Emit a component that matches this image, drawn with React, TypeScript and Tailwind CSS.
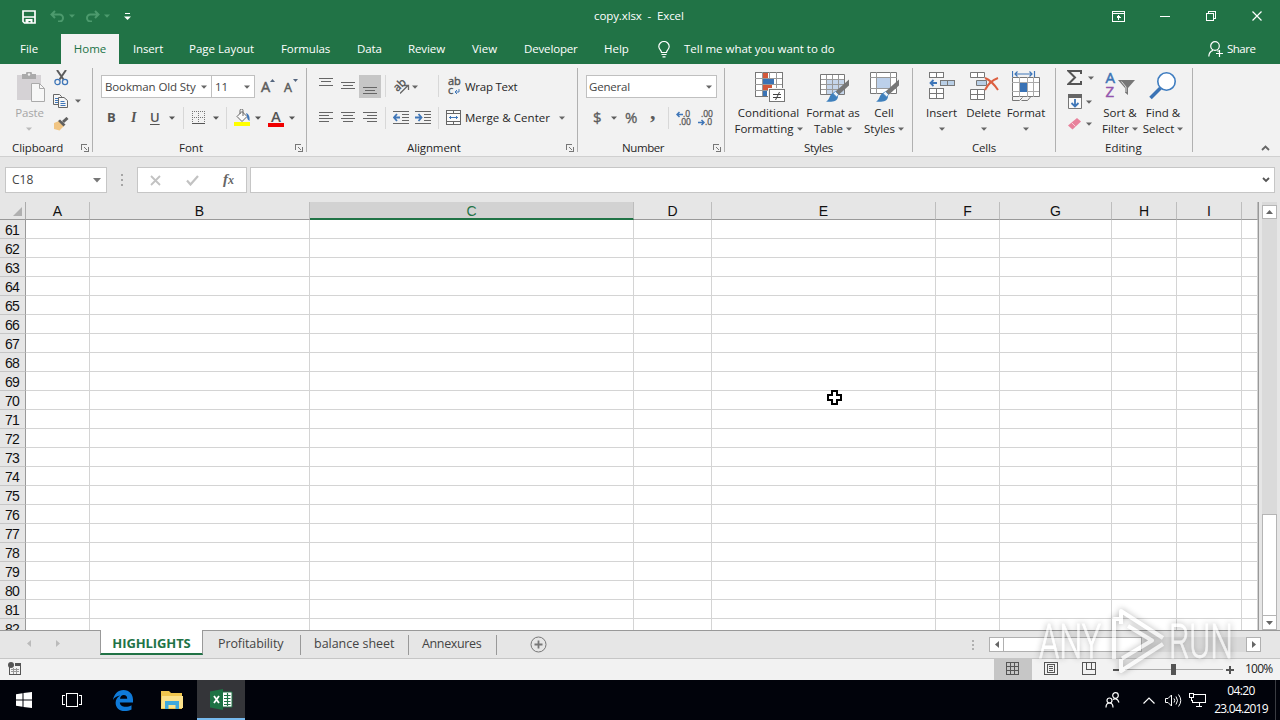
import type { ReactNode } from "react";
import clsx from "clsx";

const columns = [
  { name: "A", width: 64 },
  { name: "B", width: 220 },
  { name: "C", width: 324, active: true },
  { name: "D", width: 78 },
  { name: "E", width: 224 },
  { name: "F", width: 64 },
  { name: "G", width: 112 },
  { name: "H", width: 65 },
  { name: "I", width: 65 },
  { name: "", width: 16 },
];

const rows = Array.from({ length: 22 }, (_, i) => 61 + i);

type IconProps = { w: number; h: number; className?: string; crisp?: boolean; children: ReactNode };

function Icon({ w, h, className, crisp, children }: IconProps) {
  return (
    <svg
      width={w}
      height={h}
      viewBox={`0 0 ${w} ${h}`}
      fill="none"
      shapeRendering={crisp ? "crispEdges" : undefined}
      className={clsx("block shrink-0", className)}
    >
      {children}
    </svg>
  );
}

function Caret({ className = "" }: { className?: string }) {
  return (
    <Icon w={6} h={4} className={className}>
      <path d="M0 .5h6L3 3.7z" fill="currentColor" />
    </Icon>
  );
}

function Launcher() {
  return (
    <Icon w={8} h={8} className="mt-1" crisp>
      <path d="M.5 6V.5H6" stroke="#777" />
      <path d="M3 3l3 3" stroke="#777" shapeRendering="auto" />
      <path d="M7.5 3v4.500H3" stroke="#777" />
    </Icon>
  );
}

type GroupProps = { label: string; className: string; labelClass: string; launcher?: boolean; children: ReactNode };

function Group({ label, className, labelClass, launcher, children }: GroupProps) {
  return (
    <div className={clsx("flex shrink-0", className)}>
      <div className="flex min-w-0 flex-1 flex-col">
        <div className="h-[76px]">{children}</div>
        <div className="flex h-4 justify-between pr-[3px]">
          <span className={clsx("leading-4", labelClass)}>{label}</span>
          {launcher && <Launcher />}
        </div>
      </div>
      <div className="mt-1 h-[84px] w-px bg-[#b1b1b1]" />
    </div>
  );
}

function Divider({ className }: { className: string }) {
  return <div className={clsx("h-[22px] w-px shrink-0 bg-[#d8d8d8]", className)} />;
}

type BigButtonProps = { icon: ReactNode; first: string; second?: string; className: string };

function BigButton({ icon, first, second, className }: BigButtonProps) {
  return (
    <div className={clsx("flex shrink-0 flex-col items-center pt-1.5", className)}>
      <div className="flex h-[35px] items-start">{icon}</div>
      <span className="h-4 leading-4">{first}</span>
      <span className="flex h-4 items-center gap-[3px] leading-4">
        {second}
        <Caret className="text-[#666]" />
      </span>
    </div>
  );
}

function Lines({ spec, className }: { spec: [number, number, number][]; className: string }) {
  return (
    <Icon w={14} h={23} className={className} crisp>
      {spec.map(([x, y, w]) => (
        <rect key={y} x={x} y={y} width={w} height={1} fill="#666" />
      ))}
    </Icon>
  );
}

function TitleBar() {
  return (
    <div className="flex h-[34px] items-center pb-[2px] text-white">
      <Icon w={14} h={14} className="ml-[22px] mt-px">
        <path d="M1 1h12v12H2.500L1 11.500zM1 7h12" stroke="#fff" strokeWidth={1.700} />
        <path d="M3.500 9h7v4h-2v-2h-2v2h-3z" fill="#fff" />
      </Icon>
      <Icon w={15} h={12} className="ml-[14px]">
        <path d="M5 1 1.500 4.500 5 8M2 4.500h7.500a3.500 3.500 0 0 1 0 7H8" stroke="#4c9a6d" strokeWidth={2} />
      </Icon>
      <Caret className="ml-[4px] text-[#4c9a6d]" />
      <Icon w={15} h={12} className="ml-[10px]">
        <path d="M10 1l3.500 3.500L10 8M13 4.500H5.500a3.500 3.500 0 0 0 0 7H7" stroke="#4c9a6d" strokeWidth={2} />
      </Icon>
      <Caret className="ml-[4px] text-[#4c9a6d]" />
      <Icon w={7} h={8} className="ml-[14px] mt-[2px]">
        <path d="M1 .5h5" stroke="#fff" />
        <path d="M0 3.500h7L3.500 7z" fill="#fff" />
      </Icon>
      <span className="ml-[463px] w-[520px] whitespace-pre tracking-[-0.1px]">copy.xlsx  -  Excel</span>
      <Icon w={13} h={11} className="-ml-[2px]" crisp>
        <path d="M.5 .5h12v10H.5zM.5 2.500h12M6.500 9V4M4.500 6.500h1V5.500h2v1h1" stroke="#fff" />
      </Icon>
      <Icon w={10} h={1} className="ml-[35px]" crisp>
        <path d="M0 .5h10" stroke="#fff" />
      </Icon>
      <Icon w={10} h={10} className="ml-9" crisp>
        <path d="M.5 2.500h7v7h-7zM2.500 2.500v-2h7v7h-2" stroke="#fff" />
      </Icon>
      <Icon w={10} h={10} className="ml-9">
        <path d="M.5 .5l9 9M9.500 .5l-9 9" stroke="#fff" strokeWidth={1.200} />
      </Icon>
    </div>
  );
}

function MenuTabs() {
  return (
    <div className="flex h-[30px] items-center text-white">
      <span className="ml-5 w-[41px]">File</span>
      <span className="flex h-full w-[58px] items-center justify-center bg-[#f2f2f2] text-[#217346]">Home</span>
      <span className="ml-[14px] w-[56px] tracking-[-0.15px]">Insert</span>
      <span className="w-[92px]">Page Layout</span>
      <span className="w-[76px] tracking-[-0.1px]">Formulas</span>
      <span className="w-[51px] tracking-[-0.1px]">Data</span>
      <span className="w-[64px] tracking-[-0.1px]">Review</span>
      <span className="w-[52px]">View</span>
      <span className="w-[80px] tracking-[-0.15px]">Developer</span>
      <span className="w-[54px]">Help</span>
      <Icon w={12} h={17}>
        <path d="M3.500 11.500C3.500 9 .8 8.500 .8 5.500a5.200 5 0 0 1 10.400 0c0 3-2.700 3.500-2.700 6zM3.500 13.500h5M4.500 15.800h3" stroke="#fff" strokeWidth={1.200} />
      </Icon>
      <span className="ml-[14px] w-[524px] tracking-[-0.02px]">Tell me what you want to do</span>
      <Icon w={15} h={16}>
        <circle cx={7} cy={5} r={4.300} stroke="#fff" strokeWidth={1.200} />
        <path d="M.8 15.500C1 11.500 2.500 10 5 9.300M9.500 9.500l1 1M8 12.500h7M11.500 9v7" stroke="#fff" strokeWidth={1.200} />
      </Icon>
      <span className="ml-1 tracking-[-0.5px]">Share</span>
    </div>
  );
}

function ClipboardGroup() {
  return (
    <Group label="Clipboard" className="w-[93px]" labelClass="pl-3 tracking-[-0.1px]" launcher>
      <div className="flex">
        <div className="ml-[14px] flex w-[31px] flex-col items-center pt-2 text-[#a6a6a6]">
          <Icon w={28} h={30} className="ml-[3px]">
            <path d="M0 3h24v25H0z" fill="#d5d2d5" />
            <path d="M5 2h4a3 3 0 0 1 6 0h4v5H5z" fill="#aaa" />
            <circle cx={12} cy={2.500} r={1.200} fill="#f2f2f2" />
            <path d="M14.500 11.500h8l5 5v13h-13z" fill="#f7f7f7" stroke="#aaa" />
            <path d="M22.500 11.500v5h5" stroke="#aaa" />
          </Icon>
          <span className="mt-[3px] h-4 leading-4 tracking-[-0.2px]">Paste</span>
          <Caret className="-ml-[2px] mt-[6px] text-[#bbb]" />
        </div>
        <div className="ml-[8px] flex flex-col pt-[6px]">
          <Icon w={15} h={16} className="ml-px">
            <path d="M3 0l6.500 9.500M12 0 5.500 9.500" stroke="#5c5c5c" strokeWidth={2} />
            <circle cx={3.500} cy={12} r={2.600} stroke="#3f76b8" strokeWidth={1.300} />
            <circle cx={11} cy={12} r={2.600} stroke="#3f76b8" strokeWidth={1.300} />
          </Icon>
          <div className="mt-2 flex items-center">
            <Icon w={15} h={14}>
              <path d="M.5 .5h6l2 2v8h-8z" fill="#f6f6f6" stroke="#666" />
              <path d="M2 4.500h3M2 6.500h3M2 8.500h3" stroke="#3f76b8" />
              <path d="M5.500 3.500h5.500l3.500 3v7h-9z" fill="#f6f6f6" stroke="#666" />
              <path d="M7.500 7.500h4M7.500 9.500h5M7.500 11.500h5" stroke="#3f76b8" />
            </Icon>
            <Caret className="ml-[7px] text-[#666]" />
          </div>
          <Icon w={16} h={14} className="mt-[9px]">
            <path d="M1 6l5-2 5 5-4.500 4.500L1 12z" fill="#f1c583" />
            <path d="M5 4l2-1.500 5.500 5L10.500 9.500z" fill="#606060" />
            <path d="M10 5l4.500-4" stroke="#606060" strokeWidth={3} />
          </Icon>
        </div>
      </div>
    </Group>
  );
}

function FontGroup() {
  return (
    <Group label="Font" className="w-[214px]" labelClass="pl-[86px]" launcher>
      <div className="flex pt-[11px]">
        <div className="ml-2 flex h-[23px] w-[111px] items-center justify-between border border-[#c0c0c0] bg-white pl-[3px] pr-1">
          <span className="whitespace-nowrap tracking-[-0.12px] text-[#444]">Bookman Old Sty</span>
          <Caret className="text-[#666]" />
        </div>
        <div className="flex h-[23px] w-[43px] items-center justify-between border border-l-0 border-[#c0c0c0] bg-white pl-[3px] pr-1">
          <span className="text-[#444]">11</span>
          <Caret className="text-[#666]" />
        </div>
        <span className="ml-[6px] mt-[2px] w-[9px] text-[14.500px] leading-5 text-[#5c5c5c] [-webkit-text-stroke:0.5px]">A</span>
        <Icon w={5} h={3} className="mt-1">
          <path d="M0 3h5L2.500 0z" fill="#55667f" />
        </Icon>
        <span className="ml-[9px] mt-[3px] w-[9px] text-[12.500px] leading-5 text-[#5c5c5c] [-webkit-text-stroke:0.5px]">A</span>
        <Icon w={5} h={3} className="mt-1">
          <path d="M0 0h5L2.500 3z" fill="#55667f" />
        </Icon>
      </div>
      <div className="mt-2 flex h-[23px] items-center text-[#555]">
        <span className="ml-[14px] w-6 text-[13px] font-bold">B</span>
        <span className="w-[19px] font-['Liberation_Serif',serif] text-[14px] font-bold italic">I</span>
        <span className="w-[19px] text-[13px] font-semibold underline underline-offset-2">U</span>
        <Caret />
        <Divider className="ml-2" />
        <Icon w={13} h={13} className="ml-2" crisp>
          <path d="M.5 0v12M6.500 0v12M12.500 0v12M0 .5h13M0 6.500h13" stroke="#777" strokeDasharray="1 1" />
          <path d="M0 12.500h13" stroke="#555" />
        </Icon>
        <Caret className="ml-2" />
        <Divider className="ml-[7px]" />
        <Icon w={17} h={17} className="ml-[7px]">
          <path d="M3 7.500 8 2.500l5 5-5 5z" fill="#fafafa" stroke="#666" />
          <path d="M6 5V1.500a1.500 1.500 0 0 1 3 0V7" stroke="#666" />
          <path d="M12 4c3 1 4 4 3.500 8-2-1-2.500-3-2.500-5z" fill="#3f76b8" />
          <path d="M0 13h16v4H0z" fill="#ff0" />
        </Icon>
        <Caret className="ml-1" />
        <div className="ml-[7px] flex h-[18px] w-4 flex-col items-center">
          <span className="h-[14px] text-[15px] font-semibold leading-[14px]">A</span>
          <div className="h-1 w-4 shrink-0 bg-[#f00000]" />
        </div>
        <Caret className="ml-[5px]" />
      </div>
    </Group>
  );
}

function AlignmentGroup() {
  return (
    <Group label="Alignment" className="w-[271px]" labelClass="pl-[100px] tracking-[-0.1px]" launcher>
      <div className="flex pt-[11px]">
        <Lines className="ml-3" spec={[[0, 3, 14], [2, 6, 10], [0, 10, 14]]} />
        <Lines className="ml-2" spec={[[0, 7, 14], [2, 10, 10], [0, 13, 14]]} />
        <div className="ml-1 h-[23px] w-[22px] bg-[#c6c6c6] pl-1">
          <Lines className="" spec={[[0, 12, 14], [2, 15, 10], [0, 18, 14]]} />
        </div>
        <Divider className="ml-1" />
        <div className="ml-[7px] flex h-[23px] w-[19px] items-center">
          <span className="-mt-[4px] w-3 -rotate-45 text-[11px] leading-3 text-[#555] [-webkit-text-stroke:0.4px]">ab</span>
          <Icon w={10} h={10} className="-ml-[5px] mt-[4px]">
            <path d="M0 9.500l8-8M4 1.500h4.500V6" stroke="#666" strokeWidth={1.300} />
          </Icon>
        </div>
        <Caret className="mt-[10px] text-[#666]" />
        <Divider className="ml-5" />
        <div className="ml-[9px] flex w-[17px] flex-col text-[11px] leading-[9px] text-[#555] [-webkit-text-stroke:0.4px]">
          <span className="pt-px">ab</span>
          <span className="flex">
            c
            <Icon w={6} h={6} className="ml-px mt-1">
              <path d="M5 0v3H1M3 1 1 3l2 2" stroke="#3f76b8" />
            </Icon>
          </span>
        </div>
        <span className="leading-[23px] tracking-[-0.25px]">Wrap Text</span>
      </div>
      <div className="mt-2 flex h-[23px] items-center">
        <Lines className="ml-3" spec={[[0, 6, 14], [0, 9, 10], [0, 12, 14], [0, 15, 10]]} />
        <Lines className="ml-2" spec={[[0, 6, 14], [2, 9, 10], [0, 12, 14], [2, 15, 10]]} />
        <Lines className="ml-2" spec={[[0, 6, 14], [4, 9, 10], [0, 12, 14], [4, 15, 10]]} />
        <Divider className="ml-2" />
        <Icon w={16} h={13} className="ml-[7px]">
          <path d="M0 .5h16M9 3.500h7M9 6.500h7M9 9.500h7M0 12.500h16" stroke="#666" />
          <path d="M1 6.500h6M4 3 1 6.500 4 10" stroke="#3f76b8" strokeWidth={1.800} />
        </Icon>
        <Icon w={16} h={13} className="ml-[6px]">
          <path d="M0 .5h16M9 3.500h7M9 6.500h7M9 9.500h7M0 12.500h16" stroke="#666" />
          <path d="M0 6.500h6M3.500 3l3 3.500-3 3.500" stroke="#3f76b8" strokeWidth={1.800} />
        </Icon>
        <Divider className="ml-[7px]" />
        <Icon w={15} h={15} className="ml-[7px]" crisp>
          <path d="M.5 .5h14v14H.5zM.5 3.500h14M.5 11.500h14M7.500 .5v3M7.500 11.500v3" fill="#fafafa" stroke="#666" />
          <path d="M3 7.500h9M4.500 6v3M10.500 6v3" stroke="#3f76b8" />
        </Icon>
        <span className="ml-1 w-[94px] tracking-[0.03px]">Merge &amp; Center</span>
        <Caret className="text-[#666]" />
      </div>
    </Group>
  );
}

function NumberGroup() {
  return (
    <Group label="Number" className="w-[147px]" labelClass="pl-[44px] tracking-[-0.4px]" launcher>
      <div className="flex pt-[11px]">
        <div className="ml-[8px] flex h-[23px] w-[131px] items-center justify-between border border-[#c0c0c0] bg-white pl-[2px] pr-1">
          <span className="tracking-[-0.2px] text-[#444]">General</span>
          <Caret className="text-[#666]" />
        </div>
      </div>
      <div className="mt-2 flex h-[23px] items-center text-[#5c5c5c]">
        <span className="ml-[15px] w-[18px] text-[15px] [-webkit-text-stroke:0.3px]">$</span>
        <Caret />
        <span className="ml-2 w-[25px] text-[15px] [-webkit-text-stroke:0.3px]">%</span>
        <span className="w-[18px] pb-[12px] font-['Liberation_Serif',serif] text-[22px] font-bold leading-[14px]">,</span>
        <Divider className="" />
        <div className="ml-[7px] flex w-[22px] flex-col text-[8.500px] leading-[8px] [-webkit-text-stroke:0.3px]">
          <span className="flex">
            <Icon w={7} h={7} className="mt-px">
              <path d="M7 3.500H1M3.500 1 1 3.500 3.500 6" stroke="#3f76b8" strokeWidth={1.500} />
            </Icon>
            .0
          </span>
          <span className="pl-[3px]">.00</span>
        </div>
        <div className="flex w-5 flex-col text-[8.500px] leading-[8px] [-webkit-text-stroke:0.3px]">
          <span className="pl-[3px]">.00</span>
          <span className="flex">
            <Icon w={7} h={7} className="mt-px">
              <path d="M0 3.500h6M3.500 1 6 3.500 3.500 6" stroke="#3f76b8" strokeWidth={1.500} />
            </Icon>
            .0
          </span>
        </div>
      </div>
    </Group>
  );
}

function Brush() {
  return (
    <>
      <path d="M29 7.500v6L18.500 23l-3-3.500z" fill="#767676" />
      <path d="M6 29.500c4-1 3-8 8-9l4 4c0 5-7 6-12 5z" fill="#3f80bd" />
      <path d="M15.500 19.500l3 3-1.800 2.500-3.700-3.500z" fill="#eef3f8" stroke="#3f80bd" strokeWidth={0.700} />
    </>
  );
}

function StylesGroup() {
  return (
    <Group label="Styles" className="w-[188px]" labelClass="pl-[79px] tracking-[-0.35px]">
      <div className="flex">
        <BigButton
          className="ml-[7px] w-[73px]"
          first="Conditional"
          second="Formatting"
          icon={
            <Icon w={30} h={31} crisp className="ml-[2px] mt-[2px]">
              <path d="M.5 .5h27v24H.5z" fill="#fff" stroke="#777" />
              <path d="M7.500 0v24M14.500 0v24M21.500 0v24M0 6.500h27M0 12.500h27M0 18.500h27" stroke="#999" />
              <path d="M8 1h5v5H8zM8 13h9v5H8z" fill="#d3583a" />
              <path d="M8 7h11v5H8zM8 19h4v5H8z" fill="#3a73b5" />
              <path d="M13 16h17v15H13z" fill="#f2f2f2" />
              <path d="M14.500 17.500h15v12h-15z" fill="#fff" stroke="#777" />
              <path d="M18 22.500h8M18 25.500h8" stroke="#444" />
              <path d="M24.500 20l-4 8" stroke="#444" shapeRendering="auto" />
            </Icon>
          }
        />
        <BigButton
          className="w-[56px]"
          first="Format as"
          second="Table"
          icon={
            <Icon w={30} h={31} className="ml-[3px] mt-[2px]">
              <path d="M.5 2.500h24v20H.5z" fill="#fff" stroke="#777" />
              <path d="M7 8h17v14H7z" fill="#c5d5ea" />
              <path d="M6.500 3v19M12.500 3v19M18.500 3v19M1 7.500h23M1 12.500h23M1 17.500h23" stroke="#999" />
              <Brush />
            </Icon>
          }
        />
        <BigButton
          className="w-[46px]"
          first="Cell"
          second="Styles"
          icon={
            <Icon w={30} h={31} className="ml-[2px] mt-[2px]">
              <path d="M.5 .5h26v21H.5z" fill="#fff" stroke="#777" />
              <path d="M6.500 0v22M20.500 0v22M0 5.500h27M0 16.500h27" stroke="#999" />
              <path d="M7 6h13v10H7z" fill="#bcd0ea" />
              <Brush />
            </Icon>
          }
        />
      </div>
    </Group>
  );
}

function CellsGroup() {
  return (
    <Group label="Cells" className="w-[143px]" labelClass="pl-[59px] tracking-[-0.2px]">
      <div className="flex">
        <BigButton
          className="ml-[7px] w-[43px]"
          first="Insert"
          icon={
            <Icon w={26} h={28} crisp className="ml-px mt-[2px]">
              <path d="M.5 .5h14v5H.5zM7.500 .5v5M.5 16.500h14v10H.5zM7.500 16v10M.5 21.500h14" fill="#fff" stroke="#777" />
              <path d="M11.500 8.500h14v5h-14zM18.500 8v5" fill="#b9cfe6" stroke="#777" />
              <path d="M1 11h7M4.500 8 1.500 11l3 3" stroke="#3f76b8" strokeWidth={1.800} shapeRendering="auto" />
            </Icon>
          }
        />
        <BigButton
          className="w-[41px]"
          first="Delete"
          icon={
            <Icon w={30} h={28} className="ml-[2px] mt-[2px]">
              <path d="M.5 .5h14v5H.5zM7.500 .5v5M.5 17.500h14v10H.5zM7.500 17v10M.5 22.500h14" fill="#fff" stroke="#777" />
              <path d="M6.500 8.500h10v5h-10z" fill="#b9cfe6" stroke="#777" />
              <path d="M15 6c5 2 9 6 13 12M28 6c-6 2-10 6-13 12" stroke="#dc5f40" strokeWidth={2} />
            </Icon>
          }
        />
        <BigButton
          className="w-[44px]"
          first="Format"
          icon={
            <Icon w={28} h={32} className="mt-px">
              <path d="M.5 0v6M22.500 0v6M3 3h17M5.500 .5 3 3l2.500 2.500M17.500 .5 20 3l-2.500 2.500" stroke="#3f76b8" strokeWidth={1.200} />
              <path d="M.5 6.500h27v19H.5z" fill="#fff" stroke="#777" />
              <path d="M7.500 6v20M15.500 6v20M21.500 6v20M0 11.500h27M0 20.500h27" stroke="#aaa" />
              <path d="M8 12h7v9H8z" fill="#3a73b5" />
              <path d="M.5 26v3.500h7l3-3M9.500 29.500h6l3-3.500" stroke="#777" />
            </Icon>
          }
        />
      </div>
    </Group>
  );
}

function EditingGroup() {
  return (
    <Group label="Editing" className="w-[137px]" labelClass="pl-[49px]">
      <div className="flex">
        <div className="ml-[11px] flex w-[28px] flex-col pt-[6px] text-[#666]">
          <div className="flex items-center">
            <Icon w={15} h={15}>
              <path d="M14 4V1H1.500l6.500 6.500L1.500 14H14v-3" stroke="#555" strokeWidth={2} />
            </Icon>
            <Caret className="ml-[6px]" />
          </div>
          <div className="ml-px mt-[9px] flex items-center">
            <Icon w={14} h={15}>
              <path d="M.5 .5h13v14H.5z" fill="#fafafa" stroke="#777" />
              <path d="M0 0h14v4H0z" fill="#666" />
              <path d="M7 5v7M3.500 9 7 12.500 10.500 9" stroke="#3f76b8" strokeWidth={1.800} />
            </Icon>
            <Caret className="ml-1" />
          </div>
          <div className="ml-px mt-2 flex items-center">
            <Icon w={14} h={13}>
              <path d="M0 8.500 9 1l4 3.500-8.500 8z" fill="#e8819b" />
              <path d="M3.500 5.500l4 4" stroke="#f7ccd6" />
            </Icon>
            <Caret className="ml-1" />
          </div>
        </div>
        <BigButton
          className="ml-[4px] w-[42px]"
          first="Sort &amp;"
          second="Filter"
          icon={
            <div className="flex">
              <div className="flex w-[12px] flex-col text-[15px] leading-[14px]">
                <span className="text-[#3a73b5] [-webkit-text-stroke:0.5px]">A</span>
                <span className="text-[#9355ad] [-webkit-text-stroke:0.5px]">Z</span>
              </div>
              <Icon w={17} h={16} className="mt-[10px]">
                <path d="M0 0h17l-7 8v7l-3-2.500V8z" fill="#777" />
                <path d="M3.500 1.500 8 7v5" stroke="#ddd" />
              </Icon>
            </div>
          }
        />
        <BigButton
          className="w-[44px]"
          first="Find &amp;"
          second="Select"
          icon={
            <Icon w={28} h={28} className="mt-[2px]">
              <path d="M1.500 26l10-10" stroke="#3a73b5" strokeWidth={3.500} />
              <circle cx={17.500} cy={9.500} r={8.700} fill="#fff" stroke="#3f7dc0" strokeWidth={1.600} />
            </Icon>
          }
        />
      </div>
    </Group>
  );
}

function Ribbon() {
  return (
    <div className="flex h-[93px] border-b border-[#d0d0d0] bg-[#f2f2f2] text-[#262626]">
      <ClipboardGroup />
      <FontGroup />
      <AlignmentGroup />
      <NumberGroup />
      <StylesGroup />
      <CellsGroup />
      <EditingGroup />
      <Icon w={9} h={6} className="ml-auto mr-[10px] mt-[81px]">
        <path d="M1 5l3.500-3.500L8 5" stroke="#666" strokeWidth={1.800} />
      </Icon>
    </div>
  );
}

function FormulaBar() {
  return (
    <div className="flex h-[45px] pt-[10px] text-[#444]">
      <div className="ml-[5px] flex h-[26px] w-[102px] items-center justify-between border border-[#c6c6c6] bg-white pl-1.5 pr-[5px]">
        <span className="text-[12px]">C18</span>
        <Icon w={8} h={5}>
          <path d="M0 0h8L4 4.500z" fill="#777" />
        </Icon>
      </div>
      <Icon w={2} h={12} className="ml-[14px] mt-[7px]" crisp>
        <path d="M0 0h2v2H0zM0 5h2v2H0zM0 10h2v2H0z" fill="#a5a5a5" />
      </Icon>
      <div className="ml-[14px] flex h-[26px] w-[110px] items-center border border-[#c6c6c6] bg-white">
        <Icon w={11} h={11} className="ml-3">
          <path d="M1 1l9 9M10 1l-9 9" stroke="#c2c2c2" strokeWidth={1.800} />
        </Icon>
        <Icon w={13} h={11} className="ml-[25px]">
          <path d="M1 5.500 4.500 9.500 12 1" stroke="#c2c2c2" strokeWidth={2.200} />
        </Icon>
        <span className="ml-[24px] pb-0.5 font-['Liberation_Serif',serif] text-[15px] font-bold italic leading-5 text-[#666]">
          f<span className="text-[12px]">x</span>
        </span>
      </div>
      <div className="ml-[3px] flex h-[26px] w-[1025px] items-center justify-end border border-[#c6c6c6] bg-white pr-1">
        <Icon w={8} h={6}>
          <path d="M1 1l3 3 3-3" stroke="#555" strokeWidth={1.800} />
        </Icon>
      </div>
    </div>
  );
}

function Sheet() {
  return (
    <div className="flex h-[428px]">
      <div className="flex w-[1259px] flex-col overflow-hidden border-r border-[#999] font-['Liberation_Sans',sans-serif] text-[14px] text-[#111]">
        <div className="flex h-[18px] shrink-0">
          <div className="flex w-[26px] shrink-0 items-end justify-end border-b border-r border-[#ababab] border-b-[#999] pb-[3px] pr-[3px]">
            <Icon w={9} h={9}>
              <path d="M9 0v9H0z" fill="#b0b0b0" />
            </Icon>
          </div>
          {columns.map((col, i) => (
            <div
              key={i}
              style={{ width: col.width }}
              className={clsx(
                "flex shrink-0 items-center justify-center border-r border-[#bdbdbd] pt-px leading-4",
                col.active ? "border-b-2 border-b-[#217346] bg-[#d2d2d2] text-[#217346]" : "border-b border-b-[#999]",
              )}
            >
              {col.name}
            </div>
          ))}
        </div>
        {rows.map((row) => (
          <div key={row} className="flex h-[19px] shrink-0">
            <div className="w-[26px] shrink-0 border-b border-r border-[#c6c6c6] border-r-[#999] pr-[6px] pt-px text-right leading-[18px] tracking-[-0.8px]">
              {row}
            </div>
            {columns.map((col, i) => (
              <div
                key={i}
                style={{ width: col.width }}
                className="shrink-0 border-b border-r border-[#d4d4d4] bg-white"
              />
            ))}
          </div>
        ))}
      </div>
      <div className="ml-[3px] flex w-[15px] flex-col bg-[#dadada] pt-[3px]">
        <div className="flex h-[14px] items-center justify-center border border-[#b5b5b5] bg-white">
          <Icon w={7} h={4}>
            <path d="M0 4h7L3.500 0z" fill="#666" />
          </Icon>
        </div>
        <div className="mt-[295px] h-[102px] border border-[#b5b5b5] bg-white" />
        <div className="flex h-[14px] items-center justify-center border border-t-0 border-[#b5b5b5] bg-white">
          <Icon w={7} h={4}>
            <path d="M0 0h7L3.500 4z" fill="#666" />
          </Icon>
        </div>
      </div>
    </div>
  );
}

function SheetTabs() {
  return (
    <div className="flex h-[29px] border-b border-[#c6c6c6] text-[12.500px] text-[#444]">
      <div className="flex w-[100px] items-center border-t border-[#999] pb-[2px]">
        <Icon w={4} h={7} className="ml-[27px]">
          <path d="M4 0v7L0 3.500z" fill="#bbb" />
        </Icon>
        <Icon w={4} h={7} className="ml-[25px]">
          <path d="M0 0v7l4-3.500z" fill="#bbb" />
        </Icon>
      </div>
      <div className="flex h-[25px] w-[103px] items-center justify-center border-x border-b-2 border-[#999] border-b-[#217346] bg-white pt-[4px] font-bold text-[#217346]">
        <span className="text-[13px] tracking-[-0.1px]">HIGHLIGHTS</span>
      </div>
      <div className="flex flex-1 items-center border-t border-[#999]">
        <span className="ml-[15px] w-[82px] tracking-[-0.1px]">Profitability</span>
        <div className="h-5 w-px bg-[#999]" />
        <span className="ml-[13px] w-[94px] tracking-[-0.02px]">balance sheet</span>
        <div className="h-5 w-px bg-[#999]" />
        <span className="ml-[13px] w-[74px] tracking-[-0.35px]">Annexures</span>
        <div className="h-5 w-px bg-[#999]" />
        <Icon w={17} h={17} className="ml-[33px]">
          <circle cx={8.500} cy={8.500} r={7.500} stroke="#777" />
          <path d="M4.500 8.500h8M8.500 4.500v8" stroke="#777" strokeWidth={1.800} />
        </Icon>
        <Icon w={2} h={10} className="ml-[425px]" crisp>
          <path d="M0 0h2v2H0zM0 4h2v2H0zM0 8h2v2H0z" fill="#b0b0b0" />
        </Icon>
        <div className="ml-[15px] flex h-[15px] w-[272px] bg-[#dadada]">
          <div className="flex w-[15px] items-center justify-center border border-[#b0b0b0] bg-white">
            <Icon w={4} h={7}>
              <path d="M4 0v7L0 3.500z" fill="#666" />
            </Icon>
          </div>
          <div className="w-[138px] border border-l-0 border-[#b0b0b0] bg-white" />
          <div className="ml-auto flex w-[15px] items-center justify-center border border-[#b0b0b0] bg-white">
            <Icon w={4} h={7}>
              <path d="M0 0v7l4-3.500z" fill="#666" />
            </Icon>
          </div>
        </div>
      </div>
    </div>
  );
}

function StatusBar() {
  return (
    <div className="flex h-[21px] items-center bg-[#f2f2f2] text-[#333]">
      <Icon w={13} h={13} className="mb-[2px] ml-2" crisp>
        <path d="M1.500 5v7.500h11v-11H7" stroke="#555" />
        <path d="M7 1h6v3H7z" fill="#555" />
        <circle cx={3} cy={3} r={3} fill="#555" shapeRendering="auto" />
        <path d="M3 7.500h8M3 9.500h8M5.500 6v6M8.500 6v6" stroke="#999" />
      </Icon>
      <div className="ml-[973px] flex h-[21px] w-[38px] items-center justify-center bg-[#c6c6c6] pb-[2px] pr-[2px]">
        <Icon w={13} h={13} crisp>
          <path d="M.5 .5h12v12H.5zM4.500 0v13M8.500 0v13M0 4.500h13M0 8.500h13" stroke="#555" />
        </Icon>
      </div>
      <Icon w={14} h={13} className="mb-[2px] ml-3" crisp>
        <path d="M.5 .5h13v12H.5zM3.500 2.500h7v8h-7zM5 4.500h4M5 6.500h4M5 8.500h4" stroke="#555" />
      </Icon>
      <Icon w={14} h={13} className="mb-[2px] ml-6" crisp>
        <path d="M.5 .5h13v12H.5zM4.500 0v7.500M9.500 0v7.500M4.500 7.500h9" stroke="#555" />
      </Icon>
      <div className="ml-[17px] h-[2px] w-[6px] bg-[#555]" />
      <div className="ml-[6px] flex w-[98px] items-center">
        <div className="h-px w-[46px] bg-[#aaa]" />
        <div className="h-[11px] w-[5px] bg-[#555]" />
        <div className="h-px flex-1 bg-[#aaa]" />
      </div>
      <Icon w={8} h={8} className="ml-[3px]" crisp>
        <path d="M0 4h8M4 0v8" stroke="#555" strokeWidth={2} />
      </Icon>
      <span className="ml-[11px] pb-[2px] text-[12px] tracking-[-0.75px] text-[#222]">100%</span>
    </div>
  );
}

function Taskbar() {
  return (
    <div className="flex h-10 items-center bg-[#01030b] text-white">
      <Icon w={16} h={16} className="ml-4">
        <path d="M0 2.200 6.500 1.300v6.200H0zM7.500 1.100 16 0v7.500H7.500zM0 8.500h6.500v6.200L0 13.800zM7.500 8.500H16V16l-8.500-1.100z" fill="#fff" />
      </Icon>
      <Icon w={20} h={14} className="ml-[30px]" crisp>
        <path d="M4.500 .5h11v13h-11zM3 2.500H.5v9H3M17 2.500h2.500v9H17" stroke="#fff" />
      </Icon>
      <Icon w={20} h={21} className="ml-[31px]">
        <path
          d="M0 10C1 4 5 0 10.500 0 16.500 0 20 4.500 20 9.500v3H6.800c.3 3 2.800 4.300 5.700 4.300 2.300 0 4.300-.6 6-1.600v4.300C16.500 20.600 14 21 11.700 21 6 21 2.600 17.500 2.600 12.700c0-3 1.800-6 4.700-7.200C4 5.700 1.300 7.500 0 10zM7 8.800h7.200C14.200 6.200 13 5 10.800 5 8.600 5 7.300 6.500 7 8.800z"
          fill="#0f7ad8"
        />
      </Icon>
      <Icon w={22} h={18} className="ml-[28px]">
        <path d="M0 0h8l2 2h11v16H0z" fill="#f0c64f" />
        <path d="M1 5h21v12H0z" fill="#fce28c" />
        <path d="M4 10h14v8h-3.500v-4h-7v4H4z" fill="#3fa9dd" />
      </Icon>
      <div className="ml-[14px] flex h-10 w-12 shrink-0 items-center justify-center border-b-2 border-[#76b9ed] bg-[#343539]">
        <Icon w={23} h={21}>
          <path d="M12 3h10v15H12z" fill="#fff" stroke="#217346" />
          <path d="M14 6.500h6.500M14 9.500h6.500M14 12.500h6.500M14 15.500h6.500M17.500 4v13" stroke="#217346" strokeWidth={1.200} />
          <path d="M0 2.500 13 0v21L0 18.500z" fill="#1d7244" />
          <path d="M4 7l5 7M9 7l-5 7" stroke="#fff" strokeWidth={1.800} />
        </Icon>
      </div>
      <Icon w={15} h={16} className="ml-[860px]">
        <circle cx={10.500} cy={3.500} r={2.800} stroke="#fff" strokeWidth={1.200} />
        <circle cx={4.500} cy={8.500} r={2.500} stroke="#fff" strokeWidth={1.200} />
        <path d="M1 15.500c0-3 1.500-4.500 3.500-4.500S8 12.500 8 15.500M8 7.500c1-1 4.500-1.500 6 3" stroke="#fff" strokeWidth={1.200} />
      </Icon>
      <Icon w={12} h={7} className="ml-[23px]">
        <path d="M.5 6.500 6 1l5.500 5.500" stroke="#fff" strokeWidth={1.200} />
      </Icon>
      <Icon w={17} h={13} className="ml-[10px]">
        <path d="M.5 4.500H3l3.500-3.500v11L3 8.500H.5z" stroke="#fff" />
        <path d="M9 4.500q1.500 2 0 4M11 2.500q3 4 0 8M13.500 .5q4.500 6 0 12" stroke="#fff" />
      </Icon>
      <Icon w={17} h={14} className="ml-[7px]" crisp>
        <path d="M5 1.500h11.500v8H3.500V7M10.500 9.500v4M7 13.500h6M.5 .5h4v4h-4zM2.500 4.500v3" stroke="#fff" />
      </Icon>
      <div className="ml-[7px] flex w-[56px] shrink-0 flex-col items-center text-[12px] leading-[18px]">
        <span className="tracking-[-0.6px]">04:20</span>
        <span className="tracking-[-0.75px]">23.04.2019</span>
      </div>
      <div className="ml-auto h-10 w-px bg-[#3a3c42]" />
      <div className="w-1" />
    </div>
  );
}

function Watermark() {
  return (
    <svg
      width={204}
      height={68}
      viewBox="0 0 204 68"
      fill="none"
      className="pointer-events-none absolute left-[1036px] top-[606px] opacity-60 drop-shadow-[0_0_3px_rgba(0,0,0,0.5)]"
    >
      <g fill="#fff" stroke="#fff" strokeWidth={0.800} fontFamily="Roboto, sans-serif" fontSize={49} fontWeight={300}>
        <text x={3} y={52} textLength={62} lengthAdjust="spacingAndGlyphs">ANY</text>
        <text x={133} y={52} textLength={64} lengthAdjust="spacingAndGlyphs">RUN</text>
      </g>
      <path
        d="M78 53V13h6M85 18V5l42 27M92 20l24 14.500-30 18M127 38 85 65V53"
        stroke="#fff"
        strokeWidth={4}
        strokeLinejoin="round"
      />
    </svg>
  );
}

export default function App() {
  return (
    <div className="relative flex h-[720px] w-[1280px] flex-col overflow-hidden bg-[#e6e6e6] font-['Open_Sans',sans-serif] text-[11.500px]">
      <div className="bg-[#217346]">
        <TitleBar />
        <MenuTabs />
      </div>
      <Ribbon />
      <FormulaBar />
      <Sheet />
      <SheetTabs />
      <StatusBar />
      <Taskbar />
      <Icon w={15} h={15} className="absolute left-[827px] top-[390px]" crisp>
        <path d="M5 1h5v4h4v5h-4v4H5v-4H1V5h4z" fill="#fff" stroke="#000" strokeWidth={2} />
      </Icon>
      <Watermark />
    </div>
  );
}
